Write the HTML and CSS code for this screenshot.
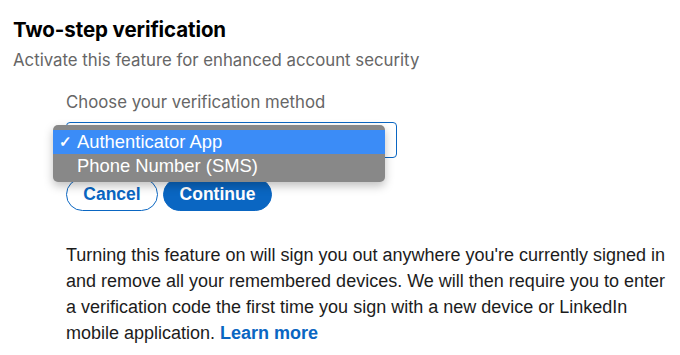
FILE: index.html
```html
<!DOCTYPE html>
<html>
<head>
<meta charset="utf-8">
<link rel="stylesheet" href="styles.css">
</head>
<body>
<div class="page">
  <h1 class="title">Two-step verification</h1>
  <p class="subtitle">Activate this feature for enhanced account security</p>
  <div class="form">
    <div class="label">Choose your verification method</div>
    <div class="select-wrap">
      <div class="select"></div>
      <ul class="menu">
        <li class="opt selected"><span class="check">✓</span>Authenticator App</li>
        <li class="opt">Phone Number (SMS)</li>
      </ul>
    </div>
    <div class="actions">
      <button class="btn btn-outline">Cancel</button>
      <button class="btn btn-primary">Continue</button>
    </div>
    <p class="info">Turning this feature on will sign you out anywhere you're currently signed in and remove all your remembered devices. We will then require you to enter a verification code the first time you sign with a new device or LinkedIn mobile application. <a class="link" href="#">Learn more</a></p>
  </div>
</div>
</body>
</html>
```

FILE: styles.css
```css
html, body {
  margin: 0;
  padding: 0;
  background: #ffffff;
}
.page {
  padding: 16px 0 0 13px;
  font-family: Inter, "Liberation Sans", sans-serif;
}
.title {
  margin: 0;
  font-size: 20.5px;
  line-height: 28px;
  font-weight: 700;
  color: #000000;
  letter-spacing: -0.1px;
}
.subtitle {
  margin: 4px 0 0 0;
  font-size: 16.8px;
  line-height: 24px;
  color: #666666;
}
.form {
  margin-left: 53px;
  padding-top: 18px;
}
.label {
  font-size: 16.8px;
  line-height: 24px;
  color: #666666;
}
.select-wrap {
  position: relative;
  margin-top: 8px;
  width: 331px;
}
.select {
  height: 34px;
  border: 1px solid #0a66c2;
  border-radius: 4px;
}
.menu {
  position: absolute;
  left: -13px;
  top: 3px;
  width: 332px;
  margin: 0;
  padding: 5px 0 4px 0;
  list-style: none;
  background: #888888;
  border-radius: 5px;
  box-shadow: 0 4px 10px rgba(0,0,0,0.25);
  font-family: "Liberation Sans", Arial, sans-serif;
  font-size: 18.4px;
  color: #ffffff;
}
.opt {
  height: 24px;
  line-height: 24px;
  padding-left: 24px;
  position: relative;
}
.opt.selected {
  background: #3b8cf7;
}
.check {
  position: absolute;
  left: 6px;
  top: 0;
  font-size: 15px;
  font-weight: 700;
}
.actions {
  display: flex;
  gap: 5px;
  margin-top: 20px;
}
.btn {
  box-sizing: border-box;
  height: 33px;
  border-radius: 17px;
  font-family: "Liberation Sans", Arial, sans-serif;
  font-size: 17.5px;
  font-weight: 700;
  padding: 0;
  cursor: pointer;
}
.btn-outline {
  background: #ffffff;
  border: 1px solid #0a66c2;
  color: #0a66c2;
  width: 92px;
}
.btn-primary {
  background: #0a66c2;
  border: 1px solid #0a66c2;
  color: #ffffff;
  width: 109px;
}
.info {
  margin: 31px 0 0 0;
  width: 606px;
  font-family: "Liberation Sans", Arial, sans-serif;
  font-size: 18px;
  line-height: 26px;
  color: #1c1c1c;
}
.link {
  color: #0a66c2;
  font-weight: 700;
  text-decoration: none;
}
```
